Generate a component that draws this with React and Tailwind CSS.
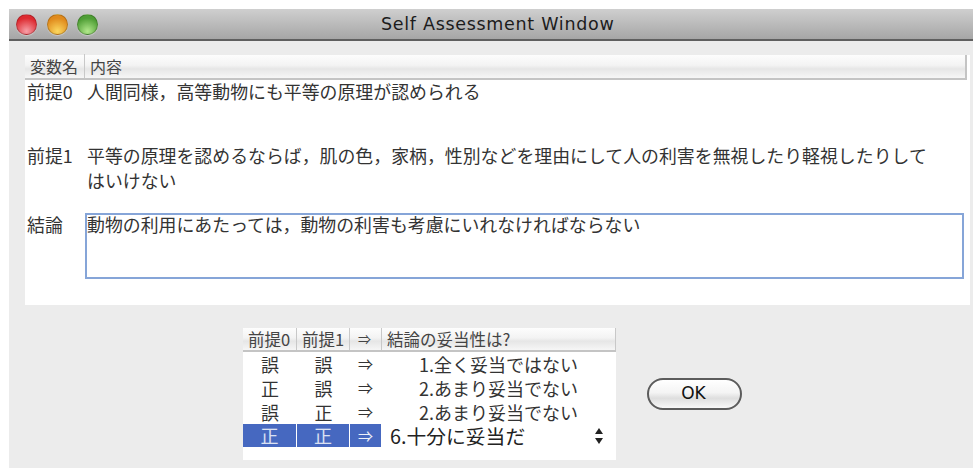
import React from 'react';

const jp = "font-['Noto_Sans_CJK_JP','Liberation_Sans',sans-serif]";

const headCell = 'flex items-center border-r border-[#c8c8c8] text-[#444] pl-[5px]';
const headBg = 'bg-[linear-gradient(#fdfdfd_0%,#f3f3f3_45%,#e6e6e6_60%,#f6f6f6_100%)] border-b-2 border-[#c4c4c4]';

const rows = [
  { a: '誤', b: '誤', result: '1.全く妥当ではない' },
  { a: '正', b: '誤', result: '2.あまり妥当でない' },
  { a: '誤', b: '正', result: '2.あまり妥当でない' },
];

const Light = ({ from, to }) => (
  <div
    className="w-[21px] h-[21px] rounded-full border border-black/20 shadow-[0_1px_1px_rgba(255,255,255,0.4)]"
    style={{ background: `radial-gradient(circle at 50% 85%, ${to} 0%, ${from} 70%)` }}
  />
);

export default function App() {
  return (
    <div className={`w-[973px] h-[468px] overflow-hidden bg-white pl-[9px] pt-[9px] ${jp}`}>
      <div className="h-full bg-[#ececec]">
        {/* title bar */}
        <div className="relative h-[32px] flex items-center gap-[9.5px] pl-[7px] bg-[linear-gradient(#cfcfcf,#a6a6a6)] border-b-2 border-[#5f5f5f]">
          <Light from="#dd2a30" to="#f7a0a8" />
          <Light from="#e08a1c" to="#fbd860" />
          <Light from="#4f9e35" to="#b2e88c" />
          <div className="absolute left-[372px] top-[2px] font-['DejaVu_Sans',sans-serif] text-[17.5px] tracking-[0.7px] text-[#1c1c1c]">
            Self Assessment Window
          </div>
        </div>

        {/* variable table */}
        <div className="ml-[16px] mt-[14px] w-[945px] h-[250px] bg-white text-[17.9px] text-[#333]">
          <div className={`flex h-[25px] w-[942px] border-r-2 text-[16px] ${headBg}`}>
            <div className={`${headCell} w-[60px] -mt-[1px]`}>変数名</div>
            <div className={`${headCell} border-r-0 flex-1 -mt-[1px]`}>内容</div>
          </div>
          <div className="flex leading-[26px] -mt-[2px]">
            <div className="w-[62px] pl-[2px] shrink-0">前提0</div>
            <div>人間同様，高等動物にも平等の原理が認められる</div>
          </div>
          <div className="flex leading-[25px] mt-[39px]">
            <div className="w-[62px] pl-[2px] shrink-0">前提1</div>
            <div className="w-[850px]">
              平等の原理を認めるならば，肌の色，家柄，性別などを理由にして人の利害を無視したり軽視したりして
              はいけない
            </div>
          </div>
          <div className="flex mt-[20px]">
            <div className="w-[60px] pl-[2px] shrink-0 leading-[26px] -mt-[2px]">結論</div>
            <div className="w-[879px] h-[66px] border-2 border-[#86a5d8] leading-[18px]">
              動物の利用にあたっては，動物の利害も考慮にいれなければならない
            </div>
          </div>
        </div>

        <div className="flex mt-[23px] ml-[234px]">
          {/* judgement table */}
          <div className="w-[373px] h-[132px] bg-white">
            <div className={`flex h-[24px] text-[16.5px] ${headBg}`}>
              <div className={`${headCell} w-[54px]`}>前提0</div>
              <div className={`${headCell} w-[53px]`}>前提1</div>
              <div className={`${headCell} w-[32px] pl-[8px] text-[13px]`}>⇒</div>
              <div className={`${headCell} flex-1`}>結論の妥当性は?</div>
            </div>
            {rows.map((row) => (
              <div key={row.result + row.a} className="flex h-[24px] items-center text-[18px] leading-[24px] text-[#333]">
                <div className="w-[54px] text-center">{row.a}</div>
                <div className="w-[53px] text-center">{row.b}</div>
                <div className="w-[31px] text-center text-[15px]">⇒</div>
                <div className="flex-1 text-center">{row.result}</div>
              </div>
            ))}
            <div className="flex h-[23px] items-center text-[18px] leading-[23px]">
              <div className="w-[53px] h-full mr-[1px] bg-[#4668c0] text-white/80 text-center">正</div>
              <div className="w-[52px] h-full mr-[1px] bg-[#4668c0] text-white/80 text-center">正</div>
              <div className="w-[31px] h-full bg-[#4668c0] text-white/90 text-center text-[15px]">⇒</div>
              <div className="flex-1 flex items-center justify-between pl-[9px] pr-[12px] text-[#222]">
                <span className="text-[19.8px]">6.十分に妥当だ</span>
                <svg width="10" height="20" viewBox="0 0 10 20" className="fill-[#222]">
                  <path d="M5 2 L9 8 H1 Z" />
                  <path d="M5 18 L9 12 H1 Z" />
                </svg>
              </div>
            </div>
          </div>

          <button className="ml-[31px] mt-[50px] w-[95px] h-[32px] rounded-full border-2 border-[#5c5c5c] bg-[linear-gradient(#ffffff_0%,#f4f4f4_45%,#dedede_65%,#f8f8f8_100%)] pr-[2px] font-['DejaVu_Sans',sans-serif] text-[17px] text-[#111]">
            OK
          </button>
        </div>
      </div>
    </div>
  );
}
